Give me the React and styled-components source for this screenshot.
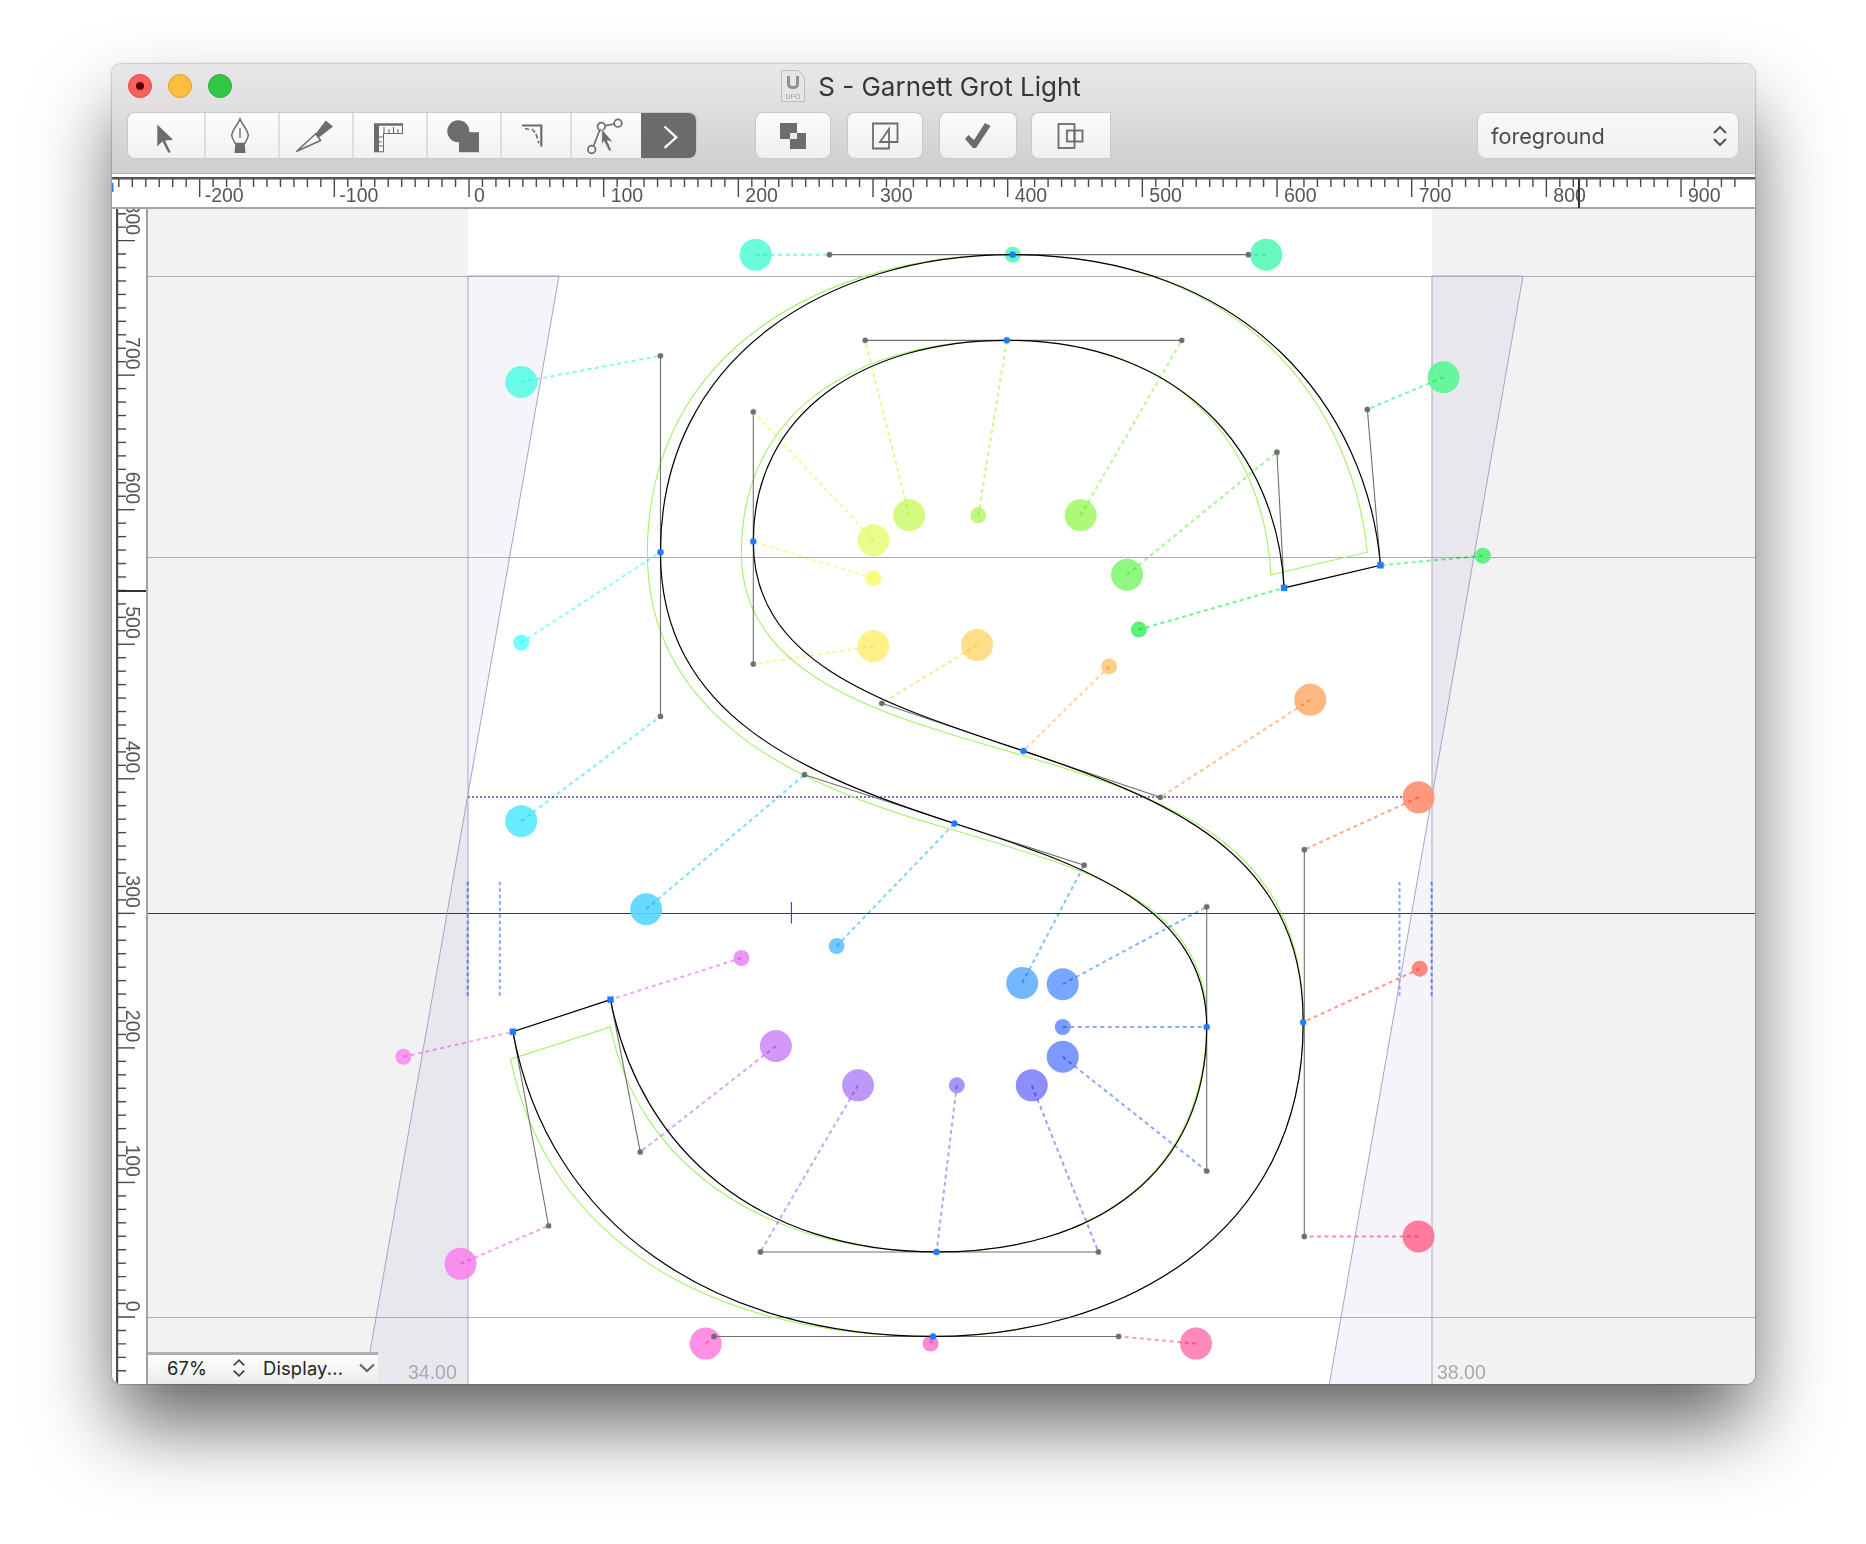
import React from "react";
import styled, { createGlobalStyle } from "styled-components";

const Global = createGlobalStyle`
  html, body { margin: 0; padding: 0; background: #fff; }
  body { font-family: "Inter", "Liberation Sans", sans-serif; }
`;

const Page = styled.div`
  width: 1866px;
  height: 1544px;
  padding: 64px 111px 0 112px;
  box-sizing: border-box;
  overflow: hidden;
  background: #fff;
`;
const Window = styled.div`
  width: 1643px;
  height: 1320px;
  display: flex;
  flex-direction: column;
  border-radius: 9px;
  overflow: hidden;
  box-shadow: 0 44px 80px -4px rgba(0, 0, 0, 0.62), 0 0 2px rgba(0, 0, 0, 0.55);
  background: #fff;
`;
const TitleBar = styled.header`
  height: 110px;
  flex: none;
  box-sizing: border-box;
  border-bottom: 1px solid #b4b3b5;
  background: linear-gradient(#e9e7e9, #e1dfe2 35%, #cfcdd0);
  display: flex;
  flex-direction: column;
`;
const TitleRow = styled.div`
  height: 49px;
  flex: none;
  display: grid;
  grid-template-columns: 1fr auto 1fr;
  align-items: center;
  padding: 0 16px;
`;
const Lights = styled.div`
  display: flex;
  gap: 16px;
  margin-top: -5px;
`;
const Light = styled.span`
  width: 24px;
  height: 24px;
  border-radius: 50%;
  box-sizing: border-box;
  background: ${(p) => p.$bg};
  border: 1px solid ${(p) => p.$line};
  display: flex;
  align-items: center;
  justify-content: center;
`;
const RedDot = styled.span`
  width: 8px;
  height: 8px;
  border-radius: 50%;
  background: #5a0508;
`;
const Title = styled.div`
  display: flex;
  align-items: center;
  gap: 13px;
  margin: -5px 5px 0 0;
`;
const TitleText = styled.span`
  font-size: 26px;
  color: #393437;
  white-space: nowrap;
`;
const ProxyDoc = styled.svg`
  width: 24px;
  height: 32px;
  display: block;
`;
const ToolbarRow = styled.div`
  display: flex;
  align-items: flex-start;
  height: 45px;
  padding: 0 17px 0 16px;
`;
const Segmented = styled.div`
  display: flex;
  width: 568px;
  height: 45px;
  box-sizing: border-box;
  border-radius: 7px;
  overflow: hidden;
  background: linear-gradient(#fdfdfd, #f1f1f1);
  box-shadow: 0 0 0 1px #c9c8ca;
`;
const Segment = styled.div`
  width: ${(p) => p.$w}px;
  flex: none;
  box-sizing: border-box;
  border-right: 2px solid ${(p) => (p.$last ? "transparent" : "#dfdedf")};
  display: flex;
  align-items: center;
  justify-content: center;
  background: ${(p) => (p.$active ? "#6b6b6b" : "transparent")};
`;
const Buttons = styled.div`
  display: flex;
  gap: 18px;
  margin-left: 60px;
`;
const Btn = styled.div`
  width: ${(p) => p.$w}px;
  height: 45px;
  flex: none;
  margin-right: ${(p) => (p.$tight ? "-2px" : "0")};
  display: flex;
  align-items: center;
  justify-content: center;
  border-radius: ${(p) => (p.$cut ? "7px 0 0 7px" : "7px")};
  background: linear-gradient(#fbfbfb, #f0f0f0);
  box-shadow: 0 0 0 1px #c9c8ca;
`;
const Popup = styled.div`
  margin-left: auto;
  width: 260px;
  height: 45px;
  box-sizing: border-box;
  padding: 0 10px 0 13px;
  display: flex;
  align-items: center;
  justify-content: space-between;
  border-radius: 8px;
  background: linear-gradient(#f9f9f9, #efefef);
  box-shadow: 0 0 0 1px #c9c8ca;
  font-size: 21.7px;
  color: #4c4c4c;
`;
const RulerH = styled.svg`
  display: block;
  flex: none;
  width: 1643px;
  height: 35px;
  background: #fff;
`;
const Body = styled.div`
  display: flex;
  flex: 1;
  min-height: 0;
`;
const RulerV = styled.svg`
  display: block;
  flex: none;
  width: 36px;
  height: 1177px;
  background: #fff;
`;
const CanvasArea = styled.div`
  position: relative;
  flex: 1;
  background: #f2f2f2;
  overflow: hidden;
`;
const CanvasSvg = styled.svg`
  display: block;
  width: 1607px;
  height: 1177px;
`;
const StatusBar = styled.div`
  position: absolute;
  left: 0;
  bottom: 0;
  width: 230px;
  height: 32px;
  box-sizing: border-box;
  border-top: 3px solid #aeaeae;
  padding-bottom: 3px;
  background: linear-gradient(#fdfdfd, #ececec);
  display: flex;
  align-items: center;
  font-size: 18.3px;
  letter-spacing: 0.2px;
  color: #222;
`;
const ZoomLabel = styled.span`
  margin-left: 19px;
  width: 65px;
`;
const DisplayLabel = styled.span`
  margin-left: 17px;
  width: 96px;
  white-space: nowrap;
`;
const Dash = styled.line`
  mix-blend-mode: multiply;
`;

const S = 1866 / 1568;
const k = (v) => +(v * S).toFixed(2);

/* ---- ruler ---- */
const RX = (u) => 469 + 1.3467 * u;
const RY = (v) => 1317 - 1.3455 * v;
const range = (a, b, st) => {
  const o = [];
  for (let i = a; i <= b; i += st) o.push(i);
  return o;
};

const HRuler = () => (
  <RulerH viewBox="112 174 1643 35">
    <rect x="112" y="177" width="1643" height="2.5" fill="#555" />
    <rect x="112" y="207" width="1643" height="2" fill="#a4a4a4" />
    <rect x="112" y="183" width="1.5" height="9" fill="#2f7fe8" />
    {range(-260, 940, 10).map((u) => {
      const major = u % 100 === 0;
      return (
        <line
          key={u}
          x1={RX(u)}
          x2={RX(u)}
          y1="179"
          y2={major ? 197 : 187}
          stroke="#484848"
          strokeWidth="1.4"
        />
      );
    })}
    {range(-200, 900, 100).map((u) => (
      <text
        key={u}
        x={RX(u) + (u <= 0 ? 5 : 7)}
        y="202"
        fontFamily="'Liberation Sans', sans-serif"
        fontSize="19.5"
        fill="#555"
      >
        {u}
      </text>
    ))}
    <rect x="1578" y="179" width="2" height="29" fill="#333" />
  </RulerH>
);

const VRuler = () => (
  <RulerV viewBox="112 209 36 1177">
    <rect x="116" y="209" width="2.2" height="1177" fill="#4c4c4c" />
    <rect x="146" y="209" width="2" height="1177" fill="#a0a0a0" />
    {range(-40, 830, 10).map((v) => {
      const major = v % 100 === 0;
      return (
        <line
          key={v}
          x1="118"
          x2={major ? 135 : 126}
          y1={RY(v)}
          y2={RY(v)}
          stroke="#484848"
          strokeWidth="1.4"
        />
      );
    })}
    {range(0, 800, 100).map((v) => (
      <text
        key={v}
        transform={`translate(126 ${RY(v) - 5.5}) rotate(90)`}
        textAnchor="end"
        fontFamily="'Liberation Sans', sans-serif"
        fontSize="19.5"
        fill="#555"
      >
        {v}
      </text>
    ))}
    <rect x="118" y="590" width="28" height="2" fill="#333" />
  </RulerV>
);

/* ---- glyph ---- */
const OUT = [
  [[1149, 344], [1049, 214], [850, 214]],
  [[697, 214], [555, 299], [555, 464]],
  [[555, 602], [676, 651], [802, 692]],
  [[911, 727], [1014, 762], [1014, 863]],
  [[1014, 984], [923, 1052], [787, 1052]],
  [[639, 1052], [538, 968], [513, 840]],
  "L",
  [[461, 1030], [600, 1123], [784, 1123]],
  [[940, 1123], [1096, 1039], [1095, 859]],
  [[1096, 714], [975, 670], [860, 631]],
  [[741, 591], [633, 558], [633, 455]],
  [[633, 346], [727, 286], [846, 286]],
  [[993, 286], [1073, 380], [1079, 494]],
];
const pt = (p) => `${k(p[0])} ${k(p[1])}`;
const glyphD =
  `M${pt([1160, 475])} C${pt(OUT[0][0])} ${pt(OUT[0][1])} ${pt(OUT[0][2])} ` +
  OUT.slice(1)
    .map((s) => (s === "L" ? `L${pt([431, 867])}` : `C${pt(s[0])} ${pt(s[1])} ${pt(s[2])}`))
    .join(" ") +
  " Z";

const GREEN = [
  "M1149 464",
  "C1137 344 1049 214 850 214",
  "C697 214 544 292 544 465",
  "C544 600 664 660 800 697",
  "C900 728 1014 752 1014 858",
  "C1014 984 923 1052 787 1052",
  "C639 1052 535 975 513 863",
  "L429 890",
  "C461 1045 600 1123 784 1123",
  "C940 1123 1096 1039 1095 859",
  "C1096 710 985 672 860 635",
  "C745 602 623 570 623 465",
  "C623 340 727 286 846 286",
  "C993 286 1062 375 1068 483",
  "Z",
]
  .join(" ")
  .replace(/-?\d+(\.\d+)?/g, (n) => String(k(+n)));

const HANDLES = [
  [1160, 475, 1149, 344],
  [1049, 214, 697, 214],
  [555, 299, 555, 602],
  [676, 651, 911, 727],
  [1014, 762, 1014, 984],
  [923, 1052, 639, 1052],
  [538, 968, 513, 840],
  [431, 867, 461, 1030],
  [600, 1123, 940, 1123],
  [1096, 1039, 1096, 714],
  [975, 670, 741, 591],
  [633, 558, 633, 346],
  [727, 286, 993, 286],
  [1073, 380, 1079, 494],
];
const OFF = [
  [1149, 344], [1049, 214], [697, 214], [555, 299], [555, 602], [676, 651], [911, 727],
  [1014, 762], [1014, 984], [923, 1052], [639, 1052], [538, 968], [461, 1030], [600, 1123],
  [940, 1123], [1096, 1039], [1096, 714], [975, 670], [741, 591], [633, 558], [633, 346],
  [727, 286], [993, 286], [1073, 380],
];
const ON = [
  [851, 214], [555, 464], [802, 692], [1014, 863], [787, 1052], [784, 1123], [1095, 859],
  [860, 631], [633, 455], [846, 286],
];
const SQ = [[1160, 475], [1079, 494], [513, 840], [431, 867]];

/* cx, cy, big?, tx, ty, colour */
const DOTS = [
  [635, 214, 1, 697, 214, "#5ffcd8"],
  [851, 214, 0, 850, 214, "#55f7c0"],
  [1064, 214, 1, 1049, 214, "#5cf8b8"],
  [1213, 317, 1, 1149, 344, "#5cf598"],
  [1246, 467, 0, 1160, 475, "#55f280"],
  [438, 321, 1, 555, 299, "#5ffce6"],
  [438, 540, 0, 555, 464, "#66ffff"],
  [438, 690, 1, 555, 602, "#5cebff"],
  [543, 764, 1, 676, 651, "#5cd6ff"],
  [703, 795, 0, 802, 692, "#66c6ff"],
  [859, 826, 1, 911, 727, "#68b2ff"],
  [893, 827, 1, 1014, 762, "#6da0ff"],
  [893, 863, 0, 1014, 863, "#7093ff"],
  [893, 888, 1, 1014, 984, "#7390ff"],
  [867, 912, 1, 923, 1052, "#8585fb"],
  [804, 912, 0, 787, 1052, "#a08ef5"],
  [721, 912, 1, 639, 1052, "#b890f5"],
  [652, 879, 1, 538, 968, "#d090f7"],
  [623, 805, 0, 513, 840, "#e590f8"],
  [339, 888, 0, 431, 867, "#fb90f3"],
  [387, 1062, 1, 461, 1030, "#fa88ec"],
  [593, 1129, 1, 600, 1123, "#ff88e0"],
  [782, 1129, 0, 784, 1123, "#ff80cc"],
  [1005, 1129, 1, 940, 1123, "#ff80b4"],
  [1192, 1039, 1, 1096, 1039, "#ff7298"],
  [1193, 814, 0, 1095, 859, "#ff8074"],
  [1192, 670, 1, 1096, 714, "#ff9274"],
  [1101, 588, 1, 975, 670, "#ffb276"],
  [932, 560, 0, 860, 631, "#ffca80"],
  [821, 542, 1, 741, 591, "#ffdc80"],
  [734, 543, 1, 633, 558, "#ffef80"],
  [734, 486, 0, 633, 455, "#fbfb78"],
  [734, 454, 1, 633, 346, "#e8fc80"],
  [764, 433, 1, 727, 286, "#d2fa78"],
  [822, 433, 0, 846, 286, "#baf870"],
  [908, 433, 1, 993, 286, "#aaf870"],
  [947, 483, 1, 1073, 380, "#88f878"],
  [957, 529, 0, 1079, 494, "#50f070"],
];

const GUIDE = "#aeaeb2";
const Canvas = () => (
  <CanvasSvg viewBox="148 209 1607 1177">
    <rect x="468" y="209" width="964" height="1177" fill="#fff" />
    <path d="M468 276 L559 276 L364 1386 L468 1386 Z" fill="rgba(80,60,170,0.055)" stroke="none" />
    <path d="M1432 276 L1523 276 L1329 1386 L1432 1386 Z" fill="rgba(80,60,170,0.055)" stroke="none" />
    <line x1="148" x2="1755" y1="276.5" y2="276.5" stroke={GUIDE} />
    <line x1="148" x2="1755" y1="557.5" y2="557.5" stroke={GUIDE} />
    <line x1="148" x2="1755" y1="1317.5" y2="1317.5" stroke={GUIDE} />
    <line x1="468" x2="1432" y1="797" y2="797" stroke="#8070b8" strokeDasharray="2 2" strokeWidth="2" />
    <line x1="148" x2="1755" y1="913.5" y2="913.5" stroke="#1a2fc0" />
    <path d="M468 1386 V276 H559 L364 1386" fill="none" stroke="#a8a3c8" />
    <path d="M1432 1386 V276 H1523 L1329 1386" fill="none" stroke="#a8a3c8" />
    {[393, 420, 1176, 1203].map((x) => (
      <line
        key={x}
        x1={k(x)}
        x2={k(x)}
        y1={k(741)}
        y2={k(838)}
        stroke={x === 393 || x === 1203 ? "#5d7df0" : "#86a3ff"}
        strokeWidth="2"
        strokeDasharray="3.5 3"
      />
    ))}
    <line x1={k(665)} x2={k(665)} y1={k(758)} y2={k(776)} stroke="#1a2fc0" />

    <path d={GREEN} fill="none" stroke="#a6f06a" strokeWidth="1.1" />
    {DOTS.map((d, i) => (
      <circle key={i} cx={k(d[0])} cy={k(d[1])} r={d[2] ? 16 : 8} fill={d[5]} fillOpacity="0.93" />
    ))}
    {DOTS.map((d, i) => (
      <Dash
        key={i}
        x1={k(d[0])}
        y1={k(d[1])}
        x2={k(d[3])}
        y2={k(d[4])}
        stroke={d[5]}
        strokeOpacity="0.8"
        strokeWidth="2"
        strokeDasharray="4 3.5"
      />
    ))}
    {HANDLES.map((h, i) => (
      <line key={i} x1={k(h[0])} y1={k(h[1])} x2={k(h[2])} y2={k(h[3])} stroke="#6f6f6f" strokeWidth="1.1" />
    ))}
    <path d={glyphD} fill="none" stroke="#000" strokeWidth="1.2" />
    {OFF.map((p, i) => (
      <circle key={i} cx={k(p[0])} cy={k(p[1])} r="2.6" fill="#6e6e6e" stroke="#6e6e6e" strokeOpacity="0.3" strokeWidth="1.2" />
    ))}
    {ON.map((p, i) => (
      <circle key={i} cx={k(p[0])} cy={k(p[1])} r="3" fill="#1f7cff" stroke="#1f7cff" strokeOpacity="0.4" strokeWidth="1.2" />
    ))}
    {SQ.map((p, i) => (
      <rect key={i} x={k(p[0]) - 3} y={k(p[1]) - 3} width="6" height="6" fill="#1f7cff" stroke="#1f7cff" strokeOpacity="0.4" strokeWidth="1" />
    ))}
    <text x="408" y="1379" fontFamily="'Liberation Sans', sans-serif" fontSize="19.5" fill="#aaa">
      34.00
    </text>
    <text x="1437" y="1379" fontFamily="'Liberation Sans', sans-serif" fontSize="19.5" fill="#aaa">
      38.00
    </text>
  </CanvasSvg>
);

/* ---- icons ---- */
const G = "#6c6c6c";
const Arrow = () => (
  <svg width="22" height="36" viewBox="0 0 22 36">
    <path d="M2.3 6.5 L18 21.8 L10 22.5 L15.7 34.2 L13.3 34.8 L7.3 23.2 L2.3 28.5 Z" fill={G} />
  </svg>
);
const Nib = () => (
  <svg width="24" height="38" viewBox="0 0 24 38">
    <path d="M10 2 C8 8 1.8 13 1.8 18.5 C1.8 21.5 4 24 5.5 26.5 H14.5 C16 24 18.2 21.5 18.2 18.5 C18.2 13 12 8 10 2 Z" fill="none" stroke={G} strokeWidth="1.5" />
    <path d="M10 11 V21" stroke={G} strokeWidth="1.4" />
    <path d="M5.3 26.5 H14.7 L15.5 36 H4.5 Z" fill={G} />
  </svg>
);
const Knife = () => (
  <svg width="40" height="34" viewBox="0 0 40 34">
    <path d="M0.7 32.2 L19.7 14.8 L24.7 21.5 Z" fill="none" stroke={G} strokeWidth="1.5" strokeLinejoin="round" />
    <path d="M19.7 14.8 L29.7 1.5 L37 7.5 L23 18.5 Z" fill={G} />
  </svg>
);
const Square = () => (
  <svg width="32" height="34" viewBox="0 0 32 34">
    <path d="M0 4.2 H29 V15 H10 V33.2 H0 Z" fill={G} />
    <path d="M5 6.7 H28 V14 H9 V32.2 H5 Z" fill="#fbfbfb" />
    <path d="M10 8 V14 M15 10 V14 M19.5 8 V14 M24 10 V14 M5 18 H9 M5 23 H8 M5 27 H9" stroke={G} strokeWidth="1.1" />
  </svg>
);
const Shapes = () => (
  <svg width="34" height="34" viewBox="0 0 34 34">
    <circle cx="11.3" cy="12.2" r="11" fill={G} />
    <rect x="12" y="13.2" width="20" height="20" fill={G} />
  </svg>
);
const Corner = () => (
  <svg width="28" height="26" viewBox="0 0 28 26">
    <path d="M0 2.5 H19.3 V23.5" fill="none" stroke={G} strokeWidth="2.2" />
    <path d="M3 5.5 L7 6.5 M10 6 L13 9.5 M14 11 L15.5 15.5 M16 18 L17 20" stroke={G} strokeWidth="1.7" />
  </svg>
);
const NodeTool = () => (
  <svg width="38" height="38" viewBox="0 0 38 38">
    <g fill="none" stroke={G} strokeWidth="1.7">
      <circle cx="5.7" cy="32.5" r="3.8" />
      <circle cx="15.3" cy="9.5" r="3.8" />
      <circle cx="32" cy="6.2" r="3.8" />
      <path d="M7.5 29 L13.8 13 M19 8.6 L28.3 7" />
    </g>
    <path d="M15.7 11.8 L27 25.2 L21.3 23.5 L25.7 33.5 L23 34.2 L18 24.2 L15.7 28.5 Z" fill={G} stroke="#f6f6f6" strokeWidth="0.7" />
  </svg>
);
const ChevR = () => (
  <svg width="20" height="28" viewBox="0 0 20 28">
    <path d="M6.5 4.5 L18.3 15.3 L6.5 25.8" fill="none" stroke="#fff" strokeWidth="2.3" />
  </svg>
);
const Layers = () => (
  <svg width="28" height="28" viewBox="0 0 28 28">
    <rect x="1" y="1" width="17" height="16" fill={G} />
    <rect x="11" y="11" width="16" height="16" fill={G} />
    <rect x="11" y="11" width="7" height="6" fill="#e9e9e9" />
  </svg>
);
const Copy4 = () => (
  <svg width="28" height="28" viewBox="0 0 28 28">
    <path d="M2 1.5 H26.5 V20 H18 V26.5 H2 Z M18 20 V7 L9 20 H18" fill="none" stroke={G} strokeWidth="1.8" />
  </svg>
);
const Check = () => (
  <svg width="28" height="26" viewBox="0 0 28 26">
    <path d="M1 16 L4.5 12 L10 17 L21 0 L26.5 3 L12 25 H9 Z" fill={G} />
  </svg>
);
const Merge = () => (
  <svg width="28" height="28" viewBox="0 0 28 28">
    <g fill="none" stroke={G} strokeWidth="1.8">
      <rect x="1.5" y="2" width="16" height="24" />
      <rect x="10" y="8.5" width="15.5" height="11" />
      <path d="M17.5 8.5 V19.5" />
    </g>
  </svg>
);
const UpDown = ({ w = 16, h = 22, stroke = "#555" }) => (
  <svg width={w} height={h} viewBox="0 0 16 22">
    <path d="M2 8 L8 2 L14 8 M2 14 L8 20 L14 14" fill="none" stroke={stroke} strokeWidth="2" />
  </svg>
);
const ChevDown = () => (
  <svg width="16" height="10" viewBox="0 0 16 10">
    <path d="M1 1.5 L8 8 L15 1.5" fill="none" stroke="#666" strokeWidth="2.2" />
  </svg>
);

const segs = [
  [78, <Arrow />],
  [74, <Nib />],
  [74, <Knife />],
  [74, <Square />],
  [74, <Shapes />],
  [69.5, <Corner />],
  [69.5, <NodeTool />],
];

export default function App() {
  return (
    <>
      <Global />
      <Page>
        <Window>
          <TitleBar>
            <TitleRow>
              <Lights>
                <Light $bg="#fc5f5b" $line="#e24b45">
                  <RedDot />
                </Light>
                <Light $bg="#fdbd3e" $line="#e19f2a" />
                <Light $bg="#33c748" $line="#2bac3c" />
              </Lights>
              <Title>
                <ProxyDoc viewBox="0 0 24 32">
                  <path d="M.5 .5 H17 L23.5 7 V31.5 H.5 Z" fill="#e6e6e7" stroke="#bdbdbf" />
                  <path d="M6 6 V14 Q6 19 12 19 Q18 19 18 14 V6 H15 V14 Q15 16 12 16 Q9 16 9 14 V6 Z" fill="#909092" />
                  <text x="12" y="29" textAnchor="middle" fontFamily="'Liberation Sans', sans-serif" fontSize="7" fill="#9a9a9c">
                    UFO
                  </text>
                </ProxyDoc>
                <TitleText>S - Garnett Grot Light</TitleText>
              </Title>
              <span />
            </TitleRow>
            <ToolbarRow>
              <Segmented>
                {segs.map(([w, icon], i) => (
                  <Segment key={i} $w={w} $last={i === segs.length - 1}>
                    {icon}
                  </Segment>
                ))}
                <Segment $w={55} $active $last>
                  <ChevR />
                </Segment>
              </Segmented>
              <Buttons>
                <Btn $w={74}><Layers /></Btn>
                <Btn $w={74}><Copy4 /></Btn>
                <Btn $w={76} $tight><Check /></Btn>
                <Btn $w={78} $cut><Merge /></Btn>
              </Buttons>
              <Popup>
                <span>foreground</span>
                <UpDown />
              </Popup>
            </ToolbarRow>
          </TitleBar>
          <HRuler />
          <Body>
            <VRuler />
            <CanvasArea>
              <Canvas />
              <StatusBar>
                <ZoomLabel>67%</ZoomLabel>
                <UpDown w={14} h={20} stroke="#444" />
                <DisplayLabel>Display...</DisplayLabel>
                <ChevDown />
              </StatusBar>
            </CanvasArea>
          </Body>
        </Window>
      </Page>
    </>
  );
}
